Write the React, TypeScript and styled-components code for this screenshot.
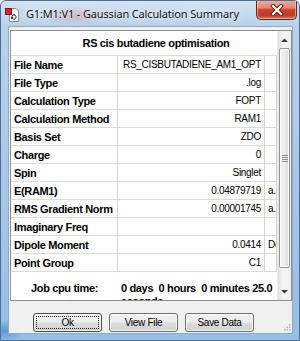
import React from "react";
import styled, { createGlobalStyle } from "styled-components";

const Global = createGlobalStyle`
  html, body { margin: 0; padding: 0; background: #ffffff; }
  body { width: 300px; height: 341px; overflow: hidden; }
  * { box-sizing: border-box; }
`;

const Window = styled.div`
  width: 300px;
  height: 341px;
  display: flex;
  flex-direction: column;
  border: 1px solid #4d6f96;
  border-radius: 6px 6px 0 0;
  overflow: hidden;
  background:
    radial-gradient(ellipse 34px 9px at 74px 15px, rgba(220, 150, 160, 0.55), rgba(220, 150, 160, 0)),
    radial-gradient(ellipse 20px 12px at 4px 330px, rgba(40, 120, 200, 0.55), rgba(40, 120, 200, 0)),
    linear-gradient(180deg, #d3e3f3 0px, #b9d2ea 24px, #aac8e7 160px, #97bee6 100%);
  font-family: "Liberation Sans", Arial, sans-serif;
`;

const TitleBar = styled.div`
  height: 25px;
  flex: none;
  display: flex;
  align-items: flex-start;
  padding-left: 4px;
`;

const AppIcon = styled.svg`
  margin-top: 6px;
  flex: none;
`;

const TitleText = styled.div`
  margin-left: 6px;
  margin-top: 5px;
  font-family: "Noto Sans", "Liberation Sans", sans-serif;
  font-size: 11px;
  letter-spacing: -0.15px;
  line-height: 15px;
  color: #101010;
  white-space: nowrap;
  text-shadow: 0 0 6px rgba(255, 255, 255, 0.9), 0 0 2px rgba(255, 255, 255, 0.8);
`;

const CloseButton = styled.div`
  margin-left: auto;
  margin-right: 2px;
  margin-top: -1px;
  width: 41px;
  height: 20px;
  border: 1px solid #6b2219;
  border-top: none;
  border-radius: 0 0 5px 5px;
  background: linear-gradient(180deg, #eab0a2 0%, #dc8a78 40%, #c8442f 52%, #c23a26 80%, #d77a60 100%);
  box-shadow: inset 0 0 0 1px rgba(255, 210, 200, 0.55);
  display: flex;
  align-items: center;
  justify-content: center;
`;

const Client = styled.div`
  flex: 1;
  margin: 0 6px 6px 7px;
  border: 1px solid #8fa9c6;
  background: #f0f0f0;
  display: flex;
  flex-direction: column;
  min-height: 0;
`;

const Panel = styled.div`
  margin: 3px 0 0 1px;
  height: 271px;
  flex: none;
  border: 1px solid #8a8e94;
  background: #ffffff;
  display: flex;
  overflow: hidden;
`;

const Content = styled.div`
  width: 266px;
  flex: none;
  display: flex;
  flex-direction: column;
  overflow: hidden;
`;

const Header = styled.div`
  height: 25px;
  flex: none;
  border-bottom: 1px solid #dadada;
  display: flex;
  align-items: center;
  justify-content: center;
  padding-left: 24px;
  font-weight: bold;
  font-size: 11px;
  letter-spacing: -0.35px;
  color: #000;
  white-space: nowrap;
`;

const Grid = styled.div`
  display: grid;
  grid-template-columns: 107px 147px 12px;
  grid-auto-rows: 18px;
  flex: none;
`;

const Cell = styled.div<{ $align?: "left" | "right" }>`
  border-right: 1px solid #d4d4d4;
  border-bottom: 1px solid #dadada;
  display: flex;
  align-items: center;
  justify-content: ${(p) => (p.$align === "right" ? "flex-end" : "flex-start")};
  overflow: hidden;
  white-space: nowrap;
  color: #000;
`;

const LabelCell = styled(Cell)`
  padding-left: 3px;
  font-weight: bold;
  font-size: 11px;
  letter-spacing: -0.35px;
`;

const ValueCell = styled(Cell)`
  padding-right: 3px;
  font-size: 10px;
  letter-spacing: -0.3px;
`;

const UnitCell = styled(Cell)`
  padding-left: 3px;
  font-size: 10px;
  letter-spacing: -0.3px;
`;

const JobRow = styled.div`
  display: flex;
  padding-top: 10px;
  font-weight: bold;
  font-size: 11px;
  letter-spacing: -0.35px;
  line-height: 13px;
  color: #000;
`;

const JobLabel = styled.div`
  width: 107px;
  flex: none;
  text-align: center;
`;

const JobValue = styled.div`
  width: 155px;
  padding-left: 3px;
  overflow: hidden;
  white-space: pre;
`;

const ScrollBar = styled.div`
  width: 14px;
  flex: none;
  display: flex;
  flex-direction: column;
  background: linear-gradient(90deg, #e3e3e3 0%, #f3f3f3 40%, #f0f0f0 100%);
  border-left: 1px solid #ececec;
`;

const ScrollArrow = styled.div`
  height: 17px;
  flex: none;
  display: flex;
  align-items: center;
  justify-content: center;
`;

const ScrollThumb = styled.div`
  height: 220px;
  flex: none;
  margin: 0 1px;
  border: 1px solid #979797;
  border-radius: 2px;
  background: linear-gradient(90deg, #f4f4f4 0%, #ececec 50%, #d9d9d9 100%);
  box-shadow: inset 0 0 0 1px rgba(255, 255, 255, 0.8);
  display: flex;
  align-items: center;
  justify-content: center;
`;

const Grip = styled.div`
  width: 6px;
  height: 7px;
  background: repeating-linear-gradient(180deg, #6f6f6f 0px, #6f6f6f 1px, #e8e8e8 1px, #e8e8e8 2px);
  opacity: 0.7;
`;

const Spacer = styled.div`
  flex: 1;
`;

const ButtonBar = styled.div`
  margin-top: 12px;
  padding-left: 24px;
  display: flex;
  gap: 7px;
  position: relative;
  flex: 1;
`;

const Button = styled.div<{ $default?: boolean }>`
  width: 69px;
  height: 19px;
  border: 1px solid ${(p) => (p.$default ? "#4e4e4e" : "#707070")};
  border-radius: 3px;
  background: linear-gradient(180deg, #f2f2f2 0%, #ebebeb 48%, #dddddd 52%, #cfcfcf 100%);
  box-shadow: inset 0 0 0 1px rgba(255, 255, 255, 0.75);
  display: flex;
  align-items: center;
  justify-content: center;
  font-size: 10px;
  letter-spacing: -0.3px;
  color: #000;
  padding: 2px;
`;

const FocusRect = styled.div`
  width: 100%;
  height: 100%;
  border: 1px dotted #222;
  display: flex;
  align-items: center;
  justify-content: center;
`;

const ResizeGrip = styled.svg`
  position: absolute;
  right: 1px;
  bottom: 1px;
`;

type Row = { label: string; value: string; unit?: string };

const rows: Row[] = [
  { label: "File Name", value: "RS_CISBUTADIENE_AM1_OPT" },
  { label: "File Type", value: ".log" },
  { label: "Calculation Type", value: "FOPT" },
  { label: "Calculation Method", value: "RAM1" },
  { label: "Basis Set", value: "ZDO" },
  { label: "Charge", value: "0" },
  { label: "Spin", value: "Singlet" },
  { label: "E(RAM1)", value: "0.04879719", unit: "a.u." },
  { label: "RMS Gradient Norm", value: "0.00001745", unit: "a.u." },
  { label: "Imaginary Freq", value: "" },
  { label: "Dipole Moment", value: "0.0414", unit: "Debye" },
  { label: "Point Group", value: "C1" },
];

export default function App() {
  return (
    <>
      <Global />
      <Window>
        <TitleBar>
          <AppIcon width="15" height="15" viewBox="0 0 15 15">
            <path d="M4.5 1.5h6.5l2.5 2.5v10.5h-9z" fill="#ffffff" stroke="#8a8a8a" />
            <rect x="0.5" y="1.5" width="6" height="6" fill="#d8242a" stroke="#8d1518" />
            <path d="M7 9l2-1.5 2 1.5v2l-2 1.5-2-1.5z" fill="none" stroke="#333" strokeWidth="1" />
            <circle cx="9" cy="7.5" r="1" fill="#2d7a2d" />
            <circle cx="7" cy="11" r="0.9" fill="#1a1a1a" />
          </AppIcon>
          <TitleText>G1:M1:V1 - Gaussian Calculation Summary</TitleText>
          <CloseButton>
            <svg width="14" height="12" viewBox="0 0 14 12">
              <path d="M3 2l8 8M11 2l-8 8" stroke="#5e1d16" strokeWidth="4" strokeLinecap="square" />
              <path d="M3 2l8 8M11 2l-8 8" stroke="#ffffff" strokeWidth="2.2" strokeLinecap="square" />
            </svg>
          </CloseButton>
        </TitleBar>
        <Client>
          <Panel>
            <Content>
              <Header>RS cis butadiene optimisation</Header>
              <Grid>
                {rows.map((r) => (
                  <React.Fragment key={r.label}>
                    <LabelCell>{r.label}</LabelCell>
                    <ValueCell $align="right">{r.value}</ValueCell>
                    <UnitCell>{r.unit ?? ""}</UnitCell>
                  </React.Fragment>
                ))}
              </Grid>
              <JobRow>
                <JobLabel>Job cpu time:</JobLabel>
                <JobValue>{"0 days  0 hours  0 minutes 25.0\nseconds"}</JobValue>
              </JobRow>
            </Content>
            <ScrollBar>
              <ScrollArrow>
                <svg width="7" height="4" viewBox="0 0 7 4">
                  <path d="M0 4L3.5 0.5 7 4z" fill="#3b3b3b" />
                </svg>
              </ScrollArrow>
              <ScrollThumb>
                <Grip />
              </ScrollThumb>
              <Spacer />
              <ScrollArrow>
                <svg width="7" height="4" viewBox="0 0 7 4">
                  <path d="M0 0L3.5 3.5 7 0z" fill="#3b3b3b" />
                </svg>
              </ScrollArrow>
            </ScrollBar>
          </Panel>
          <ButtonBar>
            <Button $default>
              <FocusRect>Ok</FocusRect>
            </Button>
            <Button>View File</Button>
            <Button>Save Data</Button>
            <ResizeGrip width="9" height="9" viewBox="0 0 9 9">
              <g fill="#b5b5b5">
                <rect x="7" y="1" width="1.5" height="1.5" />
                <rect x="4.5" y="3.5" width="1.5" height="1.5" />
                <rect x="7" y="3.5" width="1.5" height="1.5" />
                <rect x="2" y="6" width="1.5" height="1.5" />
                <rect x="4.5" y="6" width="1.5" height="1.5" />
                <rect x="7" y="6" width="1.5" height="1.5" />
              </g>
            </ResizeGrip>
          </ButtonBar>
        </Client>
      </Window>
    </>
  );
}
